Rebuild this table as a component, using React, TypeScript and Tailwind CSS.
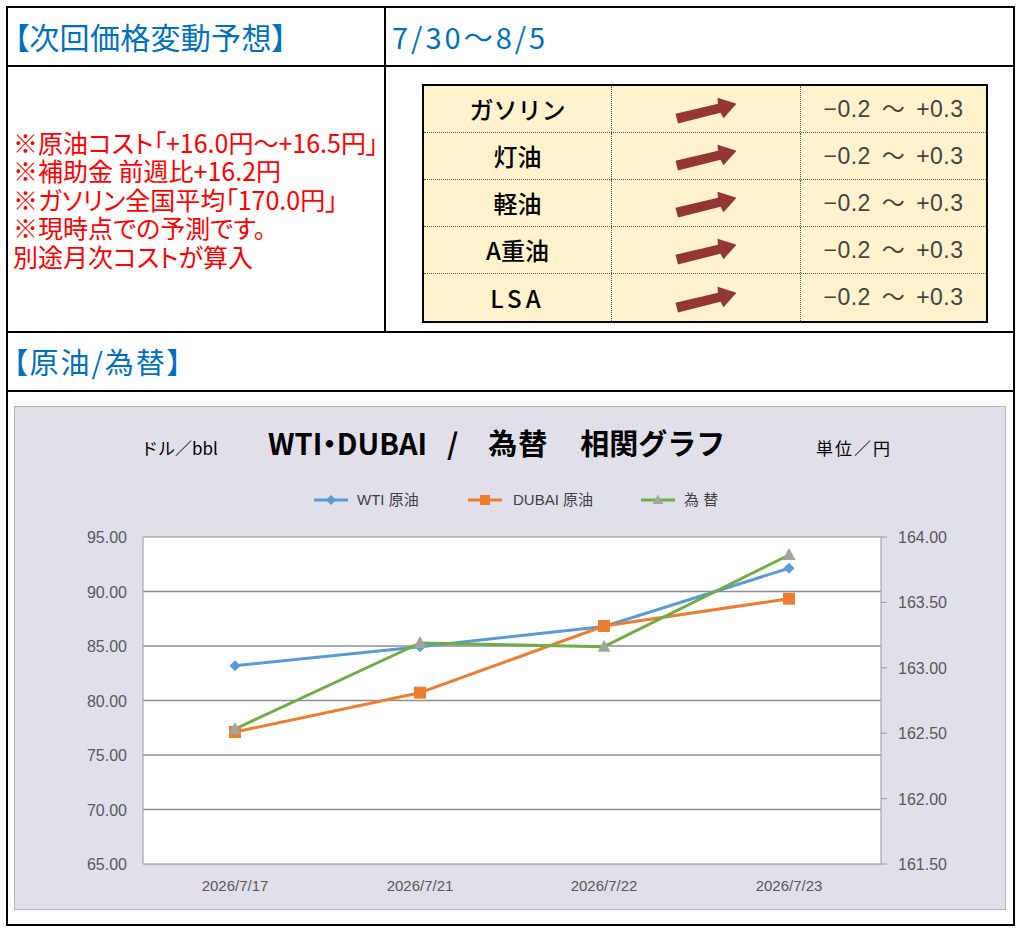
const fuels = ['ガソリン', '灯油', '軽油', 'A重油', 'LSA'];

const notes = [
  '※原油コスト「+16.0円～+16.5円」',
  '※補助金 前週比+16.2円',
  '※ガソリン全国平均「170.0円」',
  '※現時点での予測です。',
  '別途月次コストが算入',
];

// plot geometry (svg coords)
const PX0 = 128;
const PX1 = 866;
const PY0 = 10;
const PY1 = 337;
const xs = [220, 405, 589, 774];
const dates = ['2026/7/17', '2026/7/21', '2026/7/22', '2026/7/23'];
const leftLabels = ['95.00', '90.00', '85.00', '80.00', '75.00', '70.00', '65.00'];
const rightLabels = ['164.00', '163.50', '163.00', '162.50', '162.00', '161.50'];

const wti = [138.7, 119.7, 99.5, 41.3];
const dubai = [205, 165.7, 99, 71.7];
const fx = [202, 116, 119.7, 28];

function pts(ys: number[]) {
  return ys.map((y, i) => `${xs[i]},${y}`).join(' ');
}

function Arrow() {
  return (
    <svg width="66" height="30" viewBox="0 0 66 30" className="translate-y-[2px]">
      <polygon
        points="2.5,17.8 45,7.8 44.5,1.8 63.5,7.7 50.5,22.2 47.5,16.7 5,27.5"
        fill="#933634"
      />
    </svg>
  );
}

function LegendMark({ kind }: { kind: 'wti' | 'dubai' | 'fx' }) {
  const color = kind === 'wti' ? '#5b9bd5' : kind === 'dubai' ? '#ed7d31' : '#70ad47';
  return (
    <svg width="34" height="14" viewBox="0 0 34 14">
      <line x1="0" y1="7" x2="34" y2="7" stroke={color} strokeWidth="3" />
      {kind === 'wti' && <polygon points="17,2 22,7 17,12 12,7" fill="#5b9bd5" />}
      {kind === 'dubai' && <rect x="12" y="2" width="10" height="10" fill="#ed7d31" />}
      {kind === 'fx' && <polygon points="17,1.5 22.5,11 11.5,11" fill="#a3a69a" />}
    </svg>
  );
}

function Chart() {
  return (
    <div className="w-[992px] h-[504px] border border-[#b4b4c0] bg-[#e1dfea] flex flex-col font-['Noto_Sans_CJK_JP',sans-serif]">
      {/* title */}
      <div className="flex h-[70px] items-center text-black">
        <span className="ml-[126px] mt-[10px] w-[127px] text-[17px] leading-none">ドル／bbl</span>
        <div className="flex w-[548px] items-center text-[29px] font-bold leading-none">
          <span className="[font-feature-settings:'palt']">WTI・DUBAI</span>
          <span className="ml-[20px]">/</span>
          <span className="ml-[30px] tracking-[1px]">為替</span>
          <span className="ml-[32px]">相関グラフ</span>
        </div>
        <span className="mt-[10px] text-[17px] leading-none tracking-[2px]">単位／円</span>
      </div>

      {/* legend */}
      <div className="flex h-[46px] items-center text-[15px] text-[#404040] font-['Liberation_Sans','Noto_Sans_CJK_JP',sans-serif]">
        <div className="ml-[299px] flex w-[154px] items-center gap-[9px]">
          <LegendMark kind="wti" />
          <span>WTI 原油</span>
        </div>
        <div className="flex w-[173px] items-center gap-[11px]">
          <LegendMark kind="dubai" />
          <span>DUBAI 原油</span>
        </div>
        <div className="flex items-center gap-[9px]">
          <LegendMark kind="fx" />
          <span>為 替</span>
        </div>
      </div>

      {/* plot */}
      <svg width="990" height="378" viewBox="0 0 990 378" className="mt-[4px] block">
        <rect x={PX0} y={PY0} width={PX1 - PX0} height={PY1 - PY0} fill="#ffffff" />
        {leftLabels.map((l, i) => {
          const y = PY0 + 54.5 * i;
          return (
            <g key={l}>
              <line x1={PX0} y1={y} x2={PX1} y2={y} stroke="#8e8e8e" strokeWidth={i === 0 || i === 6 ? 1.2 : 1.6} />
              <text
                x="112"
                y={y + 6}
                textAnchor="end"
                fontSize="16"
                fill="#595959"
                fontFamily="'Liberation Sans', sans-serif"
              >
                {l}
              </text>
            </g>
          );
        })}
        <line x1={PX0} y1={PY0} x2={PX0} y2={PY1} stroke="#a6a6a6" strokeWidth="1.2" />
        <line x1={PX1} y1={PY0} x2={PX1} y2={PY1} stroke="#a6a6a6" strokeWidth="1.2" />
        {rightLabels.map((l, i) => {
          const y = PY0 + 65.4 * i;
          return (
            <g key={l}>
              <line x1={PX1} y1={y} x2={PX1 + 6} y2={y} stroke="#a6a6a6" strokeWidth="1.2" />
              <text x="883" y={y + 6} fontSize="16" fill="#595959" fontFamily="'Liberation Sans', sans-serif">
                {l}
              </text>
            </g>
          );
        })}
        {dates.map((d, i) => (
          <text
            key={d}
            x={xs[i]}
            y="364"
            textAnchor="middle"
            fontSize="15"
            fill="#595959"
            fontFamily="'Liberation Sans', sans-serif"
          >
            {d}
          </text>
        ))}

        <polyline points={pts(wti)} fill="none" stroke="#5b9bd5" strokeWidth="3" strokeLinejoin="round" />
        <polyline points={pts(dubai)} fill="none" stroke="#ed7d31" strokeWidth="3" strokeLinejoin="round" />
        <polyline points={pts(fx)} fill="none" stroke="#70ad47" strokeWidth="3" strokeLinejoin="round" />

        {wti.map((y, i) => (
          <polygon
            key={'w' + i}
            points={`${xs[i]},${y - 5.5} ${xs[i] + 5.5},${y} ${xs[i]},${y + 5.5} ${xs[i] - 5.5},${y}`}
            fill="#5b9bd5"
          />
        ))}
        {dubai.map((y, i) => (
          <rect key={'d' + i} x={xs[i] - 6} y={y - 6} width="12" height="12" fill="#ed7d31" />
        ))}
        {fx.map((y, i) => (
          <polygon
            key={'f' + i}
            points={`${xs[i]},${y - 7} ${xs[i] + 6.5},${y + 5} ${xs[i] - 6.5},${y + 5}`}
            fill="#a3a69a"
          />
        ))}
      </svg>
    </div>
  );
}

export default function App() {
  return (
    <div className="w-[1022px] h-[931px] bg-white pt-[6px] pl-[6px] font-['Noto_Sans_CJK_JP',sans-serif]">
      <div className="w-[1009px] h-[920px] border-2 border-black flex flex-col">
        {/* header row */}
        <div className="flex h-[59px] border-b-2 border-black">
          <div className="w-[378px] border-r-2 border-black flex items-center pl-[6px] text-[30px] tracking-[0.3px] text-[#0070c0] [font-feature-settings:'palt']">
            【次回価格変動予想】
          </div>
          <div className="flex-1 flex items-center pl-[6px] text-[29px] tracking-[3px] text-[#0070c0]">
            7/30〜8/5
          </div>
        </div>

        {/* forecast row */}
        <div className="flex h-[266px] border-b-2 border-black">
          <div className="w-[378px] border-r-2 border-black flex items-center pl-[5px] text-[25px] leading-[28.5px] text-[#ff0000] [font-feature-settings:'palt']">
            <div>
              {notes.map((n) => (
                <div key={n}>{n}</div>
              ))}
            </div>
          </div>
          <div className="flex-1 pt-[17px] pl-[36px]">
            <div className="w-[566px] h-[239px] border-2 border-black bg-[#fff2cc]">
              {fuels.map((f, i) => (
                <div
                  key={f}
                  className={
                    i < 4
                      ? 'grid grid-cols-[188px_189px_1fr] h-[47px] border-b border-dotted border-[#555555]'
                      : 'grid grid-cols-[188px_189px_1fr] h-[47px]'
                  }
                >
                  <div className="flex items-center justify-center border-r border-dotted border-[#555555] text-[24px] font-medium text-black">
                    {f === 'LSA' ? <span className="tracking-[4px]">LSA</span> : f}
                  </div>
                  <div className="flex items-center justify-center border-r border-dotted border-[#555555]">
                    <Arrow />
                  </div>
                  <div className="flex items-center justify-center text-[23px] tracking-[0.5px] [word-spacing:4px] text-[#444444] font-['Liberation_Sans','Noto_Sans_CJK_JP',sans-serif]">
                    −0.2 ～ +0.3
                  </div>
                </div>
              ))}
            </div>
          </div>
        </div>

        {/* crude / fx heading */}
        <div className="flex h-[59px] items-center border-b-2 border-black pl-[5px] text-[29px] tracking-[2px] text-[#0070c0] [font-feature-settings:'palt']">
          【原油/為替】
        </div>

        {/* chart */}
        <div className="flex-1 pt-[14px] pl-[6px]">
          <Chart />
        </div>
      </div>
    </div>
  );
}
